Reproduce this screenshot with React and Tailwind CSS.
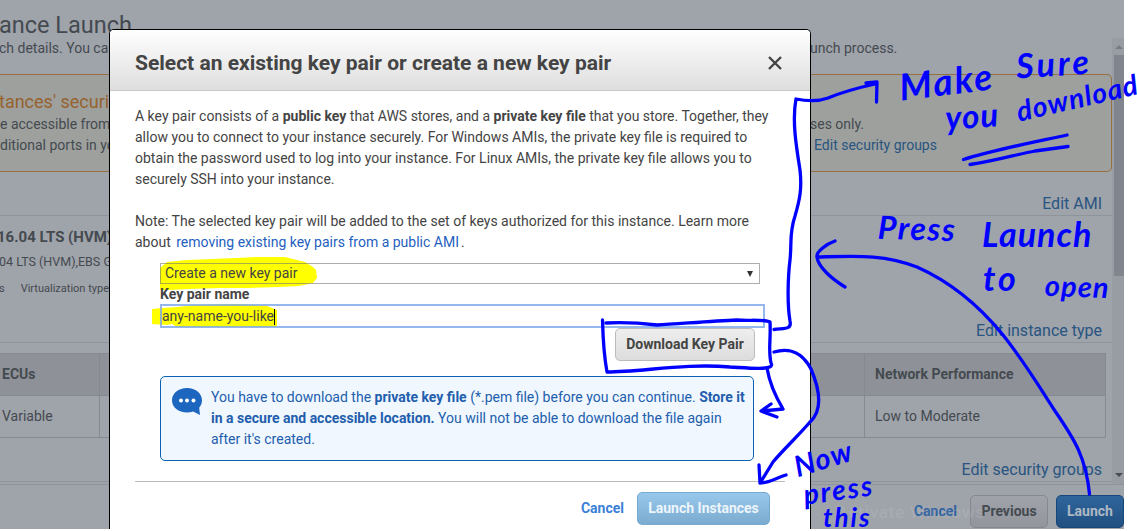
import React from "react";

function SectionHead({ label, className }) {
  return (
    <div className={`flex items-center justify-end border-b border-[#8f939a] pr-[10px] text-[16px] text-[#285581] ${className}`}>
      {label}
    </div>
  );
}

function LaunchReview() {
  return (
    <div className="flex h-[529px] w-[1124px] flex-col overflow-hidden bg-[#9fa3aa] text-[14px] leading-[21px] text-[#444a50]">
      <div className="flex h-[38px] shrink-0 items-end">
        <h1 className="-mb-px -ml-px text-[23.5px] leading-[28px]">ance Launch</h1>
      </div>
      <div className="flex h-[446px] shrink-0">
        <div className="flex w-[1112px] flex-col whitespace-nowrap">
          <div className="flex h-[36px] shrink-0">
            <p className="-ml-px w-[811px] shrink-0">ch details. You can</p>
            <p>unch process.</p>
          </div>
          <div className="h-[98px] shrink-0 rounded-r-[5px] border border-l-0 border-[#96703f] bg-[#9da09d] pt-[15px]">
            <h2 className="-ml-px text-[18px] leading-[24px] text-[#98622e]">tances&#39; security</h2>
            <div className="flex">
              <p className="w-[810px] shrink-0">e accessible from</p>
              <p>ses only.</p>
            </div>
            <div className="flex">
              <p className="w-[814px] shrink-0">ditional ports in your</p>
              <p className="text-[#285581]">Edit security groups</p>
            </div>
          </div>
          <SectionHead label="Edit AMI" className="mt-[18px] h-[26px] shrink-0 pt-[2px]" />
          <div className="h-[101px] shrink-0 pt-[10px]">
            <p className="-ml-[3px] text-[15px] font-bold leading-[22px]">16.04 LTS (HVM),</p>
            <p className="-ml-px mt-[4px] text-[12.5px] leading-[20px]">04 LTS (HVM),EBS General</p>
            <p className="-ml-px mt-[9px] text-[11px] leading-[16px]">
              s<span className="ml-[16px]">Virtualization type:</span>
            </p>
          </div>
          <SectionHead label="Edit instance type" className="h-[26px] shrink-0 pt-[2px]" />
          <div className="mt-[10px] mr-[6px] shrink-0 border border-l-0 border-[#858991]">
            <div className="flex h-[42px] items-center border-b border-[#858991] bg-[#8e9298] font-bold">
              <div className="w-[100px] border-r border-[#858991] py-[10px] pl-[2px]">ECUs</div>
              <div className="w-[765px] border-r border-[#858991] py-[10px]">&nbsp;</div>
              <div className="pl-[10px]">Network Performance</div>
            </div>
            <div className="flex h-[41px] items-center">
              <div className="w-[100px] border-r border-[#858991] py-[10px] pl-[2px]">Variable</div>
              <div className="w-[765px] border-r border-[#858991] py-[10px]">&nbsp;</div>
              <div className="pl-[10px]">Low to Moderate</div>
            </div>
          </div>
          <SectionHead label="Edit security groups" className="mt-[19px] h-[25px] shrink-0" />
        </div>
        <div className="flex w-[12px] flex-col items-center bg-[#989ca3] pl-[2px]">
          <div className="mt-[7px] border-x-[4px] border-b-[4px] border-x-transparent border-b-[#777b82]" />
          <div className="mt-[6px] h-[221px] w-full bg-[#81858d]" />
          <div className="mt-auto mb-[7px] border-x-[4px] border-t-[4px] border-x-transparent border-t-[#484c52]" />
        </div>
      </div>
      <div className="flex h-[45px] shrink-0 items-start justify-end border-t border-[#8f939a] pt-[10px] text-[14px] font-bold">
        <span className="mt-[6px] mr-[13px] text-[#2f62a0]">Cancel</span>
        <button className="mr-[8px] h-[33px] w-[78px] rounded-[5px] border border-[#85898f] bg-linear-to-b from-[#a0a4aa] to-[#92969c]">
          Previous
        </button>
        <button className="h-[33px] w-[68px] rounded-[5px] border border-[#17477a] bg-linear-to-b from-[#2f669d] to-[#214f80] text-[#aeb9c5]">
          Launch
        </button>
      </div>
    </div>
  );
}

function SpeechBubble() {
  return (
    <svg width="30" height="27" viewBox="0 0 30 27" className="mt-px shrink-0">
      <path d="M15 0C6.600 0 0 5.300 0 12.300S6.500 24.600 15 24.600c2.300 0 4.300-.4 6.200-1.100L28 27l-.8-7.200C29 17.700 30 15.200 30 12.300 30 5.300 23.400 0 15 0Z" fill="#1c66c0" />
      <circle cx="9" cy="12.500" r="2" fill="#fff" />
      <circle cx="15" cy="12.500" r="2" fill="#fff" />
      <circle cx="21.500" cy="12.500" r="2" fill="#fff" />
    </svg>
  );
}

function KeyPairDialog() {
  return (
    <section className="absolute left-[109px] top-[29px] h-[500px] w-[702px] overflow-hidden rounded-t-[5px] border border-b-0 border-black bg-white text-[14px] leading-[21px] text-[#444]">
      <header className="flex h-[61px] items-center justify-between border-b border-[#c8c8c8] bg-linear-to-b from-white to-[#dedede] pl-[25px] pr-[28px] pt-[6px]">
        <h2 className="text-[21px] font-bold">Select an existing key pair or create a new key pair</h2>
        <svg width="14" height="14" viewBox="0 0 14 14" stroke="#444" strokeWidth="2.4">
          <path d="M1 1l12 12M13 1L1 13" />
        </svg>
      </header>
      <div className="whitespace-nowrap px-[25px] pt-[15px]">
        <p>
          A key pair consists of a <b>public key</b> that AWS stores, and a <b>private key file</b> that you store. Together, they
          <br />
          allow you to connect to your instance securely. For Windows AMIs, the private key file is required to
          <br />
          obtain the password used to log into your instance. For Linux AMIs, the private key file allows you to
          <br />
          securely SSH into your instance.
        </p>
        <p className="mt-[21px]">
          Note: The selected key pair will be added to the set of keys authorized for this instance. Learn more
          <br />
          about <span className="ml-[2px] text-[#1f5fc0]">removing existing key pairs from a public AMI</span>
          <span className="ml-[2px]">.</span>
        </p>
        <form className="relative ml-[25px] mt-[10px]">
          <svg className="absolute -left-[8px] -top-[9px]" width="180" height="76" viewBox="152 254 180 76" fill="#ff0">
            <path d="M160 268l7-6 20-2 50-2 20-1 28 0 20 5 8 5 3 3 1 8-4 5-14 3-20 1-30 1-30 0-30 1-20 1-9 0Z" />
            <path d="M152 309l10-1 15-1 20-2 40-1 30 2 10 4 0 17-10 0-90 0-5-3-5 1-15-1Z" />
          </svg>
          <div className="relative flex h-[21px] w-[600px] items-center justify-between border border-[#777]/60 pl-[4px] pr-[6px]">
            <span>Create a new key pair</span>
            <span className="border-x-[3px] border-t-[6px] border-x-transparent border-t-[#333]" />
          </div>
          <div className="relative font-bold leading-[20px]">Key pair name</div>
          <div className="relative flex h-[24px] w-[605px] items-center border-2 border-[#7aa5ea]/80 pt-px">
            <span>any-name-you-like</span>
            <span className="h-[16px] w-px bg-black" />
          </div>
          <div className="flex w-[595px] justify-end">
            <button type="button" className="h-[33px] w-[140px] rounded-[5px] border border-[#bbb] bg-linear-to-b from-[#eee] to-[#ddd] font-bold">
              Download Key Pair
            </button>
          </div>
        </form>
        <div className="ml-[25px] mt-[15px] flex h-[85px] w-[594px] gap-[9px] rounded-[5px] border border-[#0a62b0] bg-[#f0f7ff] pl-[11px] pt-[10px] text-[#225ead]">
          <SpeechBubble />
          <p>
            You have to download the <b>private key file</b> (*.pem file) before you can continue. <b>Store it</b>
            <br />
            <b>in a secure and accessible location.</b> You will not be able to download the file again
            <br />
            after it&#39;s created.
          </p>
        </div>
        <footer className="mt-[20px] flex items-center justify-end border-t border-[#bbb] pr-[15px] pt-[10px] font-bold">
          <span className="mr-[13px] text-[#3b80d8]">Cancel</span>
          <button className="h-[33px] w-[133px] rounded-[5px] border border-[#76aad0] bg-linear-to-b from-[#98c8ec] to-[#7babcf] text-[#edf5fb]">
            Launch Instances
          </button>
        </footer>
      </div>
    </section>
  );
}

function Annotations() {
  return (
    <div className="pointer-events-none absolute inset-0 overflow-hidden font-['Lato',sans-serif] font-bold italic leading-none text-[#0000ff]">
      <svg className="absolute inset-0" width="1137" height="531" viewBox="0 0 1137 531" fill="none" stroke="#00f" strokeWidth="3.3" strokeLinecap="round" strokeLinejoin="round">
        <path d="M774 329.500C784 328 792 330 790 321C787 304 788 276 790 260C792 241 789 234 795 216C800 199 802 188 800 170C796 145 792 120 796 99C806 101 817 102 828 98C845 91 857 88 875 84M866 83L877 82L876.500 102" />
        <path d="M963.500 159.500C993 150 1030 143 1067 135M970 164.500C995 161 1018 154 1035 151L1068 146.500" />
        <path d="M1089.500 494C1086 458 1075 440 1055 411C1037 383 1023 360 1003 335C981 308 953 283 917 267C884 254 856 256 817 257M835 241C826 244 816 252 817 257C818 267 832 279 845 287" />
        <path d="M602.500 320C603 339 604 356 607 372C642 372 685 363 730 367C749 368 776 371 771 363C768 350 771 340 770 322C765 319 749 321 737 320C710 321 678 324 657 325C640 323 626 322 606 323" />
        <path d="M767 368C770 386 777 399 783 409L762 411M771 404L761 411L777 417" />
        <path d="M774 352C792 347 803 354 811 369C822 395 821 412 810 422C798 436 783 450 773 462L760 483M759 465L760 483C769 483 778 477 786 475" />
      </svg>
      <span className="absolute left-[899px] top-[62px] rotate-[-7deg] text-[37px] tracking-[2px]">Make</span>
      <span className="absolute left-[1016px] top-[46px] rotate-[-4deg] text-[34px] tracking-[3px]">Sure</span>
      <span className="absolute left-[945px] top-[99px] rotate-[-4deg] text-[33px] tracking-[1px]">you</span>
      <span className="absolute left-[1015px] top-[83px] rotate-[-13deg] text-[28px] tracking-[1px]">download</span>
      <span className="absolute left-[878px] top-[212px] rotate-[2deg] text-[32px] tracking-[1.5px]">Press</span>
      <span className="absolute left-[982px] top-[217px] text-[34px] tracking-[1px]">Launch</span>
      <span className="absolute left-[983px] top-[261px] text-[34px] tracking-[3px]">to</span>
      <span className="absolute left-[1045px] top-[271px] rotate-[2deg] text-[29px] tracking-[1px]">open</span>
      <span className="absolute left-[793px] top-[443px] rotate-[-17deg] text-[29px] tracking-[1px]">Now</span>
      <span className="absolute left-[803px] top-[475px] rotate-[-8deg] text-[28px] tracking-[2px]">press</span>
      <span className="absolute left-[823px] top-[504px] text-[26px] tracking-[2px]">this</span>
    </div>
  );
}

export default function App() {
  return (
    <main className="relative h-[531px] w-[1137px] overflow-hidden bg-white font-['Roboto',sans-serif]">
      <LaunchReview />
      <span className="absolute left-[837px] top-[500px] text-[17px] tracking-[0.8px] text-white/10">Activate Windows</span>
      <KeyPairDialog />
      <Annotations />
    </main>
  );
}
